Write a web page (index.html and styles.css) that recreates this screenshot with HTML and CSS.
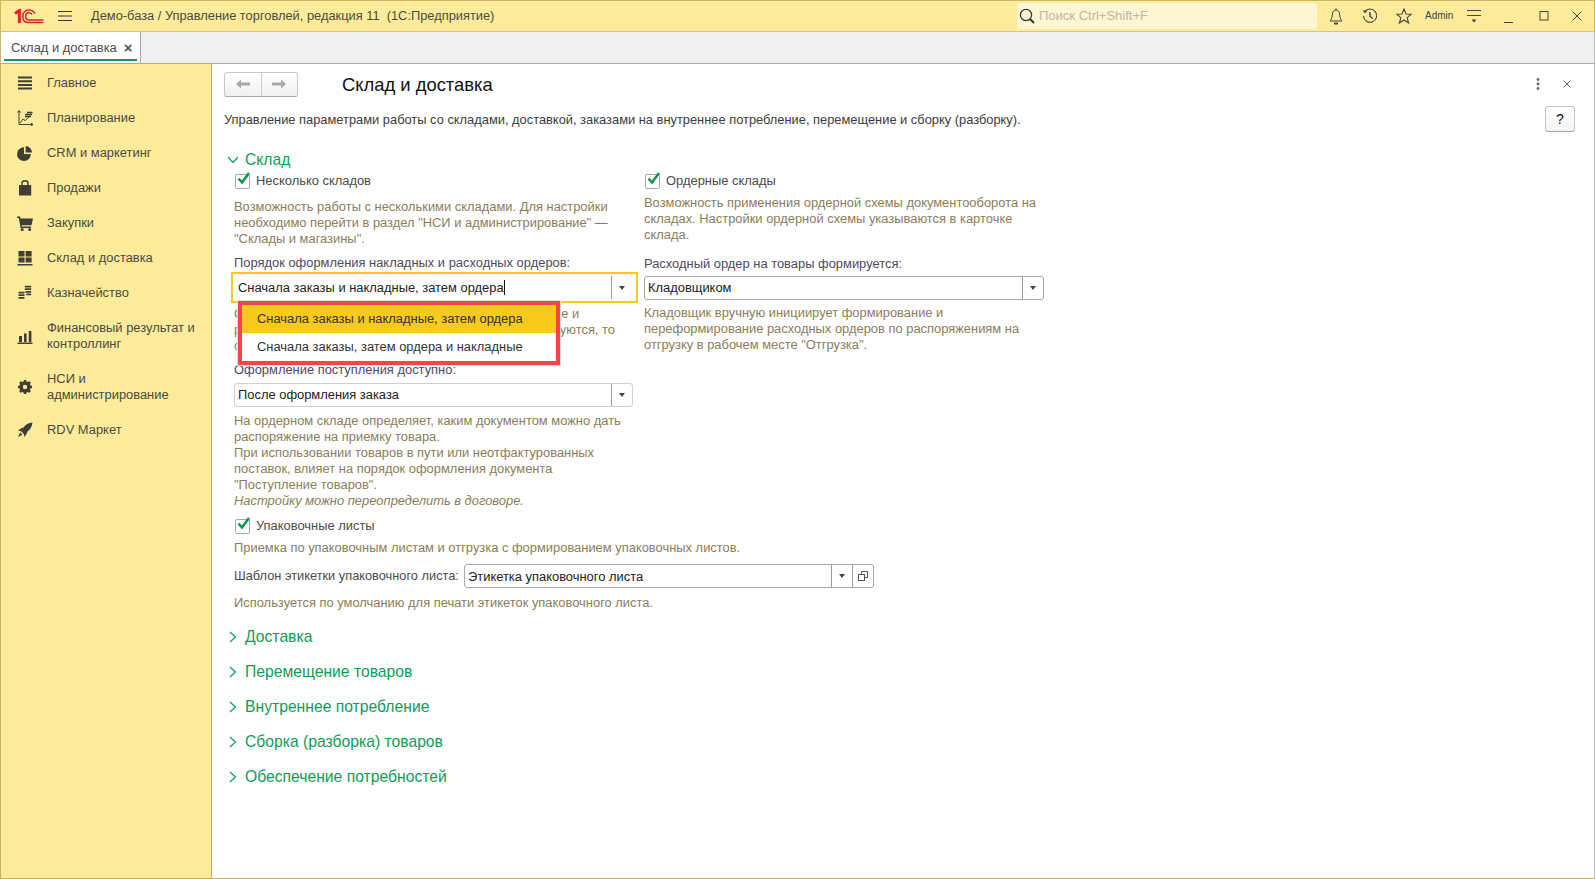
FILE: index.html
```html
<!DOCTYPE html>
<html lang="ru">
<head>
<meta charset="utf-8">
<title>Склад и доставка</title>
<link rel="stylesheet" href="styles.css">
</head>
<body>
<header class="topbar">
  <svg class="logo" width="30" height="15" viewBox="0 0 30 15" fill="none" stroke="#d8282b">
    <path d="M1 4.5 L5.4 1.5 V14" stroke-width="3"/>
    <path d="M21 4.5 C19.5 2 17.5 .9 15 .9 C11 .9 8.8 3.8 8.8 7.4 C8.8 11 11 13.6 15 13.6 H29.5" stroke-width="1.5"/>
    <path d="M18 5.4 C17.3 4.4 16.2 3.7 15 3.7 C12.8 3.7 11.6 5.3 11.6 7.4 C11.6 9.5 12.8 10.9 15 10.9 H29.5" stroke-width="1.5"/>
  </svg>
  <svg class="burger" width="14" height="12" viewBox="0 0 14 12" stroke="#3a3a32" stroke-width="1"><path d="M0 1.5H14M0 6H14M0 10.5H14"/></svg>
  <div class="apptitle">Демо-база / Управление торговлей, редакция 11&nbsp; (1С:Предприятие)</div>
  <div class="search">
    <svg width="16" height="16" viewBox="0 0 16 16" fill="none" stroke="#333" stroke-width="1.2"><circle cx="7" cy="7" r="5.6"/><path d="M11 11 L15 15" stroke-width="2"/></svg>
    <span>Поиск Ctrl+Shift+F</span>
  </div>
  <div class="sysicons">
    <svg class="sys" width="14" height="17" viewBox="0 0 14 17" fill="none" stroke="#444" stroke-width="1"><path d="M1 13 C3 11 3 9 3.4 6 C3.8 3.4 5 2 7 2 C9 2 10.2 3.4 10.6 6 C11 9 11 11 13 13 Z"/><path d="M6 1.2 H8"/><path d="M5 15.5 H9" stroke-width="2"/></svg>
    <svg class="sys" width="16" height="16" viewBox="0 0 16 16" fill="none" stroke="#444" stroke-width="1.1"><path d="M2.6 4 A6.6 6.6 0 1 1 1.5 8"/><path d="M0.8 2.2 L3 5.4 L5.2 2.8 Z" fill="#444" stroke="none"/><path d="M8 4 V8.5 L11 10.5" stroke-width="1.4"/></svg>
    <svg class="sys" width="16" height="16" viewBox="0 0 16 16" fill="none" stroke="#444" stroke-width="1.1"><path d="M8 1 L10 6 L15.2 6.2 L11.2 9.6 L12.6 15 L8 12 L3.4 15 L4.8 9.6 L0.8 6.2 L6 6 Z"/></svg>
    <span class="admin">Admin</span>
    <svg class="sys" width="16" height="14" viewBox="0 0 16 14" fill="#444" stroke="#444" stroke-width="1"><path d="M1 1.5H15M1 6.5H15" fill="none"/><path d="M5.5 10.5H10.5L8 13.5Z" stroke="none"/></svg>
    <svg class="sys" width="10" height="10" viewBox="0 0 10 10" stroke="#444" stroke-width="1"><path d="M0 9.5H9"/></svg>
    <svg class="sys" width="10" height="10" viewBox="0 0 10 10" fill="none" stroke="#444" stroke-width="1"><rect x="1" y=".5" width="8" height="8.5"/></svg>
    <svg class="sys" width="10" height="10" viewBox="0 0 10 10" stroke="#444" stroke-width="1"><path d="M.5 .5L9.5 9.5M9.5 .5L.5 9.5"/></svg>
  </div>
</header>

<nav class="tabbar">
  <div class="tab"><span>Склад и доставка</span><b class="tabclose">×</b></div>
</nav>

<div class="workspace">
  <aside class="sidebar">
    <a class="item"><svg width="16" height="16" viewBox="0 0 16 16" fill="#3f3f35"><path d="M1 1.5h14v2H1zM1 5.2h14v2H1zM1 8.9h14v2H1zM1 12.6h14v2H1z"/></svg><span>Главное</span></a>
    <a class="item"><svg width="16" height="16" viewBox="0 0 16 16" fill="none" stroke="#3f3f35"><path d="M2 1V14.5H15.5"/><path d="M.5 2.5L2 .5L3.5 2.5M14 13L16 14.5L14 16" /><path d="M3 13L6 9L8 10.5L12 7" /><path d="M8 4.5h7M8 6.5h6M10 2.5h5.5" stroke-width="1.6"/></svg><span>Планирование</span></a>
    <a class="item"><svg width="16" height="16" viewBox="0 0 16 16" fill="#3f3f35"><path d="M7 2.2V9h6.8A6.9 6.9 0 1 1 7 2.2z"/><path d="M8.6 1A6.6 6.6 0 0 1 15 7.4H8.6z"/></svg><span>CRM и маркетинг</span></a>
    <a class="item"><svg width="16" height="16" viewBox="0 0 16 16"><path d="M2 5h12.2v10.5H2z" fill="#3f3f35"/><path d="M5 7V3.4C5 1.6 6.2.8 8 .8s3 .8 3 2.6V7" fill="none" stroke="#3f3f35" stroke-width="1.4"/></svg><span>Продажи</span></a>
    <a class="item"><svg width="16" height="16" viewBox="0 0 16 16" fill="#3f3f35"><path d="M0 1.5h3l.6 2H16l-1.5 6.8H4.6l.3 1.2H14v1.4H3.6L1.8 2.9H0z"/><circle cx="5.2" cy="14.4" r="1.5"/><circle cx="12.6" cy="14.4" r="1.5"/></svg><span>Закупки</span></a>
    <a class="item"><svg width="16" height="16" viewBox="0 0 16 16" fill="#3f3f35"><path d="M1.5 1h6v5.5h-6zM8.6 1h6v5.5h-6zM1.5 7.6h6v5h-6zM8.6 7.6h6v5h-6zM.5 14h15v1.5H.5z"/></svg><span>Склад и доставка</span></a>
    <a class="item"><svg width="16" height="16" viewBox="0 0 16 16" fill="none" stroke="#3f3f35" stroke-width="1.7" stroke-linecap="round"><path d="M8.5 1.6h5M8.5 4.2h5M9 6.8h4.5M10 9.4h3.5M2.2 7.6h4.6M2.2 10.2h4.6M2.2 12.8h4.6"/></svg><span>Казначейство</span></a>
    <a class="item two"><svg width="16" height="16" viewBox="0 0 16 16" fill="#3f3f35"><path d="M2 8h3v6H2zM7 5.5h2.6V14H7zM11.8 3h2.6v11h-2.6zM.5 14.6h15V16H.5z"/></svg><span>Финансовый результат и контроллинг</span></a>
    <a class="item two"><svg width="16" height="16" viewBox="0 0 16 16"><circle cx="8" cy="8" r="4.2" fill="none" stroke="#3f3f35" stroke-width="3"/><path d="M8 1v14M1 8h14M3 3l10 10M13 3L3 13" stroke="#3f3f35" stroke-width="2.6"/><circle cx="8" cy="8" r="2.2" fill="#fbeb9b"/></svg><span>НСИ и администрирование</span></a>
    <a class="item"><svg width="16" height="16" viewBox="0 0 16 16" fill="#3f3f35"><path d="M15.5.5c-4 .4-7 2-9.5 5.4L4.7 6 1 8.5l3 .7 2.8 2.8.7 3 2.5-3.7.1-1.3c3.4-2.5 5-5.5 5.4-9.5z"/><path d="M3.2 10.5l2.3 2.3-4.5 2.2z"/></svg><span>RDV Маркет</span></a>
  </aside>

  <main class="content">
    <div class="pagehead">
      <div class="navbtns">
        <span class="navbtn"><svg width="14" height="10" viewBox="0 0 14 10" fill="#a9a9a9"><path d="M0 5L5 .5V3.6H14V6.4H5V9.5z"/></svg></span>
        <span class="navbtn"><svg width="14" height="10" viewBox="0 0 14 10" fill="#a9a9a9"><path d="M14 5L9 .5V3.6H0V6.4H9V9.5z"/></svg></span>
      </div>
      <h1 class="pagetitle">Склад и доставка</h1>
      <div class="pageactions">
        <svg width="4" height="12" viewBox="0 0 4 12" fill="#666"><circle cx="2" cy="1.5" r="1.4"/><circle cx="2" cy="6" r="1.4"/><circle cx="2" cy="10.5" r="1.4"/></svg>
        <svg width="8" height="8" viewBox="0 0 8 8" stroke="#666" stroke-width="1"><path d="M.5 .5L7.5 7.5M7.5 .5L.5 7.5"/></svg>
      </div>
    </div>
    <div class="introrow">
      <p class="intro">Управление параметрами работы со складами, доставкой, заказами на внутреннее потребление, перемещение и сборку (разборку).</p>
      <button class="help">?</button>
    </div>

    <section class="group">
      <h2 class="grouphead"><svg class="chev" width="12" height="8" viewBox="0 0 12 8" fill="none" stroke="#0e9c5a" stroke-width="1.2"><path d="M1 1L6 6.5L11 1"/></svg>Склад</h2>
      <div class="cols">
        <div class="col">
          <label class="check"><span class="box"><svg width="15" height="14" viewBox="0 0 15 14" fill="none" stroke="#0c9a50" stroke-width="2.6"><path d="M2.5 6.5L6 10.5L13 1"/></svg></span>Несколько складов</label>
          <p class="desc descfirst">Возможность работы с несколькими складами. Для настройки<br>необходимо перейти в раздел "НСИ и администрирование" —<br>"Склады и магазины".</p>
          <div class="lbl">Порядок оформления накладных и расходных ордеров:</div>
          <div class="combo wrap">
            <div class="field focus"><span class="val">Сначала заказы и накладные, затем ордера<i class="caret"></i></span><span class="drop"><i></i></span></div>
            <ul class="popup">
              <li class="sel">Сначала заказы и накладные, затем ордера</li>
              <li>Сначала заказы, затем ордера и накладные</li>
            </ul>
          </div>
          <p class="desc">Определяет порядок оформления документов в складе и<br>распоряжений на отгрузку. Если же заказы не используются, то<br>сначала оформляются накладные.</p>
          <div class="lbl">Оформление поступления доступно:</div>
          <div class="field soft"><span class="val">После оформления заказа</span><span class="drop"><i></i></span></div>
          <p class="desc">На ордерном складе определяет, каким документом можно дать<br>распоряжение на приемку товара.<br>При использовании товаров в пути или неотфактурованных<br>поставок, влияет на порядок оформления документа<br>"Поступление товаров".<br><em>Настройку можно переопределить в договоре.</em></p>
        </div>
        <div class="col">
          <label class="check"><span class="box"><svg width="15" height="14" viewBox="0 0 15 14" fill="none" stroke="#0c9a50" stroke-width="2.6"><path d="M2.5 6.5L6 10.5L13 1"/></svg></span>Ордерные склады</label>
          <p class="desc descfirst">Возможность применения ордерной схемы документооборота на<br>складах. Настройки ордерной схемы указываются в карточке<br>склада.</p>
          <div class="lbl">Расходный ордер на товары формируется:</div>
          <div class="field"><span class="val">Кладовщиком</span><span class="drop"><i></i></span></div>
          <p class="desc">Кладовщик вручную инициирует формирование и<br>переформирование расходных ордеров по распоряжениям на<br>отгрузку в рабочем месте "Отгрузка".</p>
        </div>
      </div>
      <div class="below">
        <label class="check packs"><span class="box"><svg width="15" height="14" viewBox="0 0 15 14" fill="none" stroke="#0c9a50" stroke-width="2.6"><path d="M2.5 6.5L6 10.5L13 1"/></svg></span>Упаковочные листы</label>
        <p class="desc descfirst">Приемка по упаковочным листам и отгрузка с формированием упаковочных листов.</p>
        <div class="inline">
          <span class="inlinelbl">Шаблон этикетки упаковочного листа:</span>
          <div class="field wide"><span class="val">Этикетка упаковочного листа</span><span class="drop"><i></i></span><span class="open"><svg width="10" height="10" viewBox="0 0 10 10" fill="none" stroke="#555"><path d="M3.5 3V.5H9.5V6.5H7"/><rect x=".5" y="3.5" width="6" height="6"/></svg></span></div>
        </div>
        <p class="desc lastdesc">Используется по умолчанию для печати этикеток упаковочного листа.</p>
      </div>
    </section>

    <h2 class="grouphead closed"><svg class="chev" width="8" height="12" viewBox="0 0 8 12" fill="none" stroke="#0e9c5a" stroke-width="1.2"><path d="M1 1L6.5 6L1 11"/></svg>Доставка</h2>
    <h2 class="grouphead closed"><svg class="chev" width="8" height="12" viewBox="0 0 8 12" fill="none" stroke="#0e9c5a" stroke-width="1.2"><path d="M1 1L6.5 6L1 11"/></svg>Перемещение товаров</h2>
    <h2 class="grouphead closed"><svg class="chev" width="8" height="12" viewBox="0 0 8 12" fill="none" stroke="#0e9c5a" stroke-width="1.2"><path d="M1 1L6.5 6L1 11"/></svg>Внутреннее потребление</h2>
    <h2 class="grouphead closed"><svg class="chev" width="8" height="12" viewBox="0 0 8 12" fill="none" stroke="#0e9c5a" stroke-width="1.2"><path d="M1 1L6.5 6L1 11"/></svg>Сборка (разборка) товаров</h2>
    <h2 class="grouphead closed"><svg class="chev" width="8" height="12" viewBox="0 0 8 12" fill="none" stroke="#0e9c5a" stroke-width="1.2"><path d="M1 1L6.5 6L1 11"/></svg>Обеспечение потребностей</h2>
  </main>
</div>
</body>
</html>
```

FILE: styles.css
```css
* { box-sizing: border-box; }
html, body { margin: 0; height: 100%; }
body {
  width: 1595px; height: 879px; overflow: hidden;
  display: flex; flex-direction: column;
  font: 12.92px/16px "Liberation Sans", Arial, sans-serif;
  color: #333; background: #fff;
}
.topbar {
  height: 32px; flex: none; display: flex; align-items: center;
  background: #fbeb9b; border: 1px solid #c9b865; border-bottom-color: #d9c76f;
  padding-left: 13px;
}
.logo { flex: none; }
.burger { flex: none; margin-left: 14px; }
.apptitle { margin-left: 19px; font-size: 12.85px; color: #4b4b3c; white-space: nowrap; }
.search {
  margin-left: auto; width: 300px; height: 26px; display: flex; align-items: center; gap: 4px;
  background: #fdf6d3; border-radius: 3px; padding-left: 2px; color: #bdb9a5; font-size: 13px;
}
.sysicons { width: 277px; display: flex; align-items: center; position: relative; height: 100%; padding-left: 12px; }
.sys { flex: none; }
.sysicons .sys:nth-child(1) { margin-left: 0; }
.sysicons .sys:nth-child(2) { margin-left: 19px; }
.sysicons .sys:nth-child(3) { margin-left: 18px; }
.admin { margin-left: 13px; font-size: 10px; color: #444; }
.sysicons .sys:nth-child(5) { margin-left: 13px; }
.sysicons .sys:nth-child(6) { margin-left: 22px; margin-top: 3px; }
.sysicons .sys:nth-child(7) { margin-left: 25px; }
.sysicons .sys:nth-child(8) { margin-left: 23px; }

.tabbar {
  height: 32px; flex: none; display: flex;
  background: #f0f0f0; border-bottom: 1px solid #a9a9a9; border-left: 1px solid #c9b865; border-right: 1px solid #bdbdbd;
}
.tab {
  width: 140px; background: #fff; border-right: 1px solid #a9a9a9; position: relative;
  display: flex; align-items: center; padding: 0 0 0 10px; gap: 7px; color: #4b4b4b;
}
.tab::after { content: ""; position: absolute; left: 3px; right: 3px; bottom: 2px; height: 2px; background: #0d9a5a; }
.tabclose { font-size: 15px; color: #555; font-weight: bold; }

.workspace { flex: 1; display: flex; min-height: 0; }
.sidebar {
  width: 212px; flex: none; background: #fbeb9b;
  border-left: 1px solid #c2b161; border-right: 1px solid #c2b161; border-bottom: 1px solid #c2b161;
  padding-top: 2px; display: flex; flex-direction: column;
}
.item { display: flex; align-items: center; padding: 9px 10px 10px 16px; gap: 14px; color: #4b4b3c; }
.item svg { flex: none; }
.content { flex: 1; padding-left: 12px; border-right: 1px solid #bdbdbd; border-bottom: 1px solid #c2b161; min-width: 0; }

.pagehead { display: flex; align-items: center; height: 24px; margin-top: 8px; }
.navbtns {
  display: flex; width: 74px; height: 25px; border: 1px solid #c8c8c8; border-radius: 3px; border-bottom-color: #a8a8a8;
  background: linear-gradient(#fff, #f1f1f1);
}
.navbtn { flex: 1; display: flex; align-items: center; justify-content: center; }
.navbtn + .navbtn { border-left: 1px solid #cfcfcf; }
.pagetitle { margin: 2px 0 0 44px; font-size: 18.4px; font-weight: normal; color: #111; }
.pageactions { margin-left: auto; display: flex; align-items: center; gap: 23px; padding-right: 23px; }
.introrow { display: flex; align-items: center; height: 26px; margin-top: 10px; }
.intro { margin: 2px 0 0; font-size: 12.86px; color: #3c3c3c; }
.help {
  margin-left: auto; margin-right: 19px; width: 30px; height: 26px; padding: 0; font: 14px "Liberation Sans", sans-serif; color: #111;
  background: linear-gradient(#fff, #f3f3f3); border: 1px solid #c6c6c6; border-bottom-color: #a8a8a8; border-radius: 3px;
}

.grouphead {
  margin: 0; height: 20px; display: flex; align-items: center; font-size: 15.7px; font-weight: normal; color: #0e9c5a; padding-left: 21px; position: relative;
}
.group .grouphead { margin-top: 18px; }
.chev { position: absolute; left: 3px; top: 6px; }
.closed { height: 35px; }
.closed .chev { left: 5px; top: 12px; }
.group { margin-bottom: 8px; }

.cols { display: grid; grid-template-columns: 399px 400px; column-gap: 11px; padding-left: 10px; padding-top: 1px; }
.col { min-width: 0; }
.check { display: flex; align-items: center; height: 20px; color: #4b4b4b; }
.box {
  width: 15px; height: 15px; margin: 0 6px 0 1px; flex: none; border: 1px solid #a9a9a9; border-radius: 2px; background: #fff;
  position: relative;
}
.box svg { position: absolute; left: 0; top: -3px; }
.desc { margin: 6px 0 0; color: #8c7d58; white-space: nowrap; }
.descfirst { margin-top: 8px; }
.col:last-child .descfirst { margin-top: 4px; }
.below .descfirst { margin-top: 4px; }
.lbl { margin-top: 8px; height: 16px; color: #4e4a60; }
.col:last-child .lbl { margin-top: 13px; }
.field {
  display: flex; align-items: stretch; height: 24px; margin-top: 5px; border: 1px solid #a9a9a9; border-radius: 3px; background: #fff;
  color: #222;
}
.col:last-child .field { margin-top: 4px; }
.col:last-child .field + .desc { margin-top: 5px; }
.soft { border-color: #d0d0d0; }
.val { flex: 1; padding-left: 3px; line-height: 22px; white-space: nowrap; }
.drop { width: 21px; flex: none; border-left: 1px solid #9a9a9a; display: flex; align-items: center; justify-content: center; }
.drop i { width: 0; height: 0; border: 3.5px solid transparent; border-top: 4px solid #444; border-bottom: 0; }
.wrap { position: relative; }
.focus {
  border-color: transparent; border-radius: 0; outline: 2px solid #f9c91c; outline-offset: 1px;
  width: 401px; height: 25px; margin-top: 4px;
}
.focus .val { line-height: 24px; }
.focus .drop { width: 23px; padding-right: 2px; }
.caret { display: inline-block; width: 1px; height: 15px; background: #111; vertical-align: -3px; }
.popup {
  position: absolute; left: 4px; top: 26px; width: 322px; margin: 0; padding: 0; list-style: none; z-index: 3;
  background: #fff; border: 4px solid #fb4345; outline: 1px solid #ddd; color: #333;
}
.popup li { height: 28px; line-height: 28px; padding-left: 15px; }
.popup .sel { background: #f9c91c; }

.below { padding-left: 10px; }
.packs { margin-top: 7px; }
.inline { display: flex; align-items: center; margin-top: 8px; height: 24px; }
.inlinelbl { width: 230px; flex: none; color: #4b4b4b; font-size: 12.8px; white-space: nowrap; }
.wide { width: 410px; margin-top: 0; }
.wide .val { line-height: 23px; }
.open { width: 21px; flex: none; border-left: 1px solid #9a9a9a; display: flex; align-items: center; justify-content: center; }
.lastdesc { margin-top: 7px; }
```
